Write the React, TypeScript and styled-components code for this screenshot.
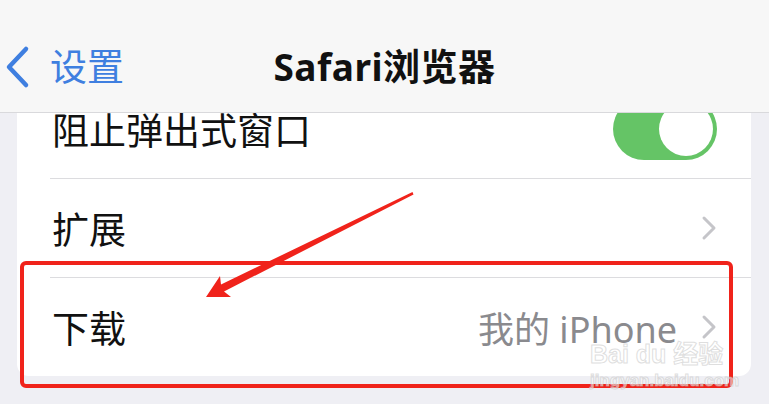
import React from 'react';
import styled, { createGlobalStyle } from 'styled-components';

const GlobalStyle = createGlobalStyle`
	html, body {
		margin: 0;
		padding: 0;
		background: #efeff4;
	}
	body {
		font-family: 'Noto Sans', 'Noto Sans CJK SC', sans-serif;
	}
`;

type RowProps = {
	label: string;
	value?: string;
	first?: boolean;
	accessory: 'toggle' | 'chevron';
};

const Chevron = () => (
	<svg width="16" height="26" viewBox="0 0 16 26">
		<path d="M3 3 L13 13 L3 23" fill="none" stroke="#c5c5c9" strokeWidth="3" strokeLinecap="round" strokeLinejoin="round" />
	</svg>
);

const SettingRow = ({ label, value, first, accessory }: RowProps) => {
	return (
		<Row>
			<RowInner first={first}>
				<Label>{label}</Label>
				{value && <Value>{value}</Value>}
				{accessory === 'toggle' ? (
					<Toggle>
						<Knob />
					</Toggle>
				) : (
					<Chevron />
				)}
			</RowInner>
		</Row>
	);
};

export const App = () => {
	return (
		<>
			<GlobalStyle />
			<Screen>
				<NavBar>
					<BackButton>
						<svg width="28" height="44" viewBox="0 0 28 44">
							<path d="M23 4 L6 22 L23 40" fill="none" stroke="#3f7fe0" strokeWidth="4.5" strokeLinecap="round" strokeLinejoin="round" />
						</svg>
						<BackText>设置</BackText>
					</BackButton>
					<Title>Safari浏览器</Title>
					<span />
				</NavBar>
				<Content>
					<Card>
						<SettingRow label="阻止弹出式窗口" first accessory="toggle" />
						<SettingRow label="扩展" accessory="chevron" />
						<SettingRow label="下载" value="我的 iPhone" accessory="chevron" />
					</Card>
				</Content>

				<Highlight />
				<Arrow width="769" height="404" viewBox="0 0 769 404">
					<polygon
						points="206,297 220,276 221,284.5 412.5,192 413.5,194.5 224,291.5 231,297"
						fill="#f0231b"
					/>
				</Arrow>
				<Watermark>
					<WatermarkLogo>Bai du 经验</WatermarkLogo>
					<WatermarkUrl>jingyan.baidu.com</WatermarkUrl>
				</Watermark>
			</Screen>
		</>
	);
};

const Screen = styled.div`
	position: relative;
	width: 769px;
	height: 404px;
	overflow: hidden;
	display: flex;
	flex-direction: column;
	background: #efeff4;
`;

const NavBar = styled.header`
	position: relative;
	z-index: 2;
	height: 113px;
	box-sizing: border-box;
	padding-top: 40px;
	background: #f7f7f7;
	border-bottom: 1px solid #d9d9dc;
	display: grid;
	grid-template-columns: 1fr auto 1fr;
	align-items: start;
`;

const BackButton = styled.div`
	display: flex;
	align-items: center;
	gap: 19px;
	height: 54px;
	padding-left: 3px;
`;

const BackText = styled.span`
	color: #3f7fe0;
	font-size: 37px;
	line-height: 54px;
`;

const Title = styled.h1`
	margin: 0;
	font-size: 37px;
	font-weight: 700;
	line-height: 54px;
	letter-spacing: 0.5px;
	color: #111;
`;

const Content = styled.main`
	flex: 1;
	overflow: hidden;
	padding: 0 18px 0 17px;
`;

const Card = styled.section`
	margin-top: -34px;
	background: #ffffff;
	border-radius: 12px;
	overflow: hidden;
`;

const Row = styled.div`
	padding-left: 33px;
`;

const RowInner = styled.div<{ first?: boolean }>`
	height: 99px;
	box-sizing: border-box;
	padding: 0 34px 0 2px;
	display: flex;
	align-items: center;
	border-top: ${props => (props.first ? 'none' : '1px solid #dcdcdf')};
`;

const Label = styled.span`
	flex: 1;
	font-size: 37px;
	color: #111;
`;

const Value = styled.span`
	font-size: 36px;
	color: #8a8a8e;
	margin-right: 24px;
`;

const Toggle = styled.div`
	width: 104px;
	height: 62px;
	border-radius: 31px;
	background: #65c466;
	display: flex;
	align-items: center;
	justify-content: flex-end;
	padding: 0 4px;
	box-sizing: border-box;
`;

const Knob = styled.div`
	width: 54px;
	height: 54px;
	border-radius: 50%;
	background: #ffffff;
`;

const Highlight = styled.div`
	position: absolute;
	left: 20px;
	top: 261px;
	width: 713px;
	height: 127px;
	box-sizing: border-box;
	border: 4px solid #f0231b;
	border-radius: 6px;
	z-index: 3;
`;

const Arrow = styled.svg`
	position: absolute;
	left: 0;
	top: 0;
	z-index: 4;
	pointer-events: none;
`;

const Watermark = styled.div`
	position: absolute;
	left: 590px;
	top: 338px;
	z-index: 5;
	display: flex;
	flex-direction: column;
	align-items: flex-start;
	color: rgba(255, 255, 255, 0.55);
	-webkit-text-stroke: 1px rgba(190, 190, 190, 0.5);
`;

const WatermarkLogo = styled.span`
	font-family: 'Liberation Sans', 'Noto Sans CJK SC', sans-serif;
	font-size: 25px;
	font-weight: 700;
	line-height: 32px;
`;

const WatermarkUrl = styled.span`
	font-family: 'Liberation Sans', sans-serif;
	font-size: 17px;
	font-weight: 700;
	line-height: 22px;
`;

export default App;
